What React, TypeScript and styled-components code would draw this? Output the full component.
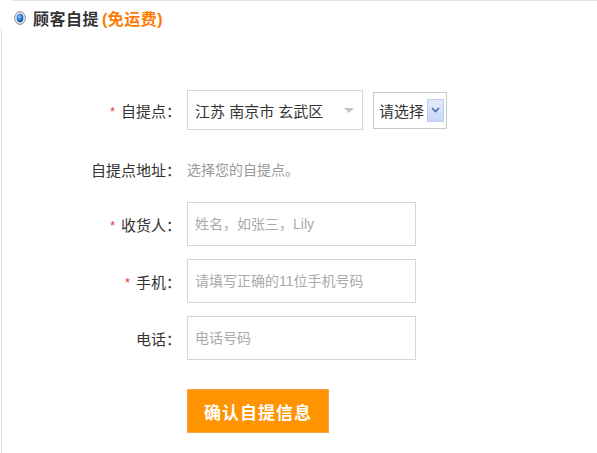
import * as React from "react";
import styled, { createGlobalStyle } from "styled-components";

const GlobalStyle = createGlobalStyle`
  html, body {
    margin: 0;
    padding: 0;
    background: #fff;
  }
  body {
    font-family: "Liberation Sans", "Noto Sans CJK SC", sans-serif;
    color: #333;
  }
`;

const Panel = styled.div`
  width: 597px;
  height: 453px;
  display: flex;
  flex-direction: column;
  overflow: hidden;
`;

const Header = styled.div`
  margin-left: 12px;
  border-top: 1px solid #e3e3e3;
  height: 29px;
  padding: 6px 0 0 2px;
  box-sizing: border-box;
  display: flex;
  align-items: center;
  gap: 7px;
`;

const Title = styled.span`
  font-size: 16px;
  font-weight: bold;
  color: #333;
  letter-spacing: 0.5px;
`;

const Free = styled.span`
  color: #ff7a00;
  margin-left: 3px;
`;

const Body = styled.div`
  flex: 1;
  margin-left: 1px;
  border-left: 1px solid #dcdcdc;
  padding-top: 61px;
  display: grid;
  grid-template-columns: 179px 1fr;
  column-gap: 6px;
  align-content: start;
`;

const Label = styled.div<{ $h: number; $mt?: number }>`
  height: ${(p) => p.$h}px;
  margin-top: ${(p) => p.$mt ?? 0}px;
  display: flex;
  align-items: center;
  justify-content: flex-end;
  font-size: 15px;
  color: #333;
`;

const Star = styled.span`
  color: #e4393c;
  font-size: 13px;
  margin-right: 6px;
  position: relative;
  top: 1px;
`;

const Field = styled.div<{ $h: number; $mt?: number }>`
  height: ${(p) => p.$h}px;
  margin-top: ${(p) => p.$mt ?? 0}px;
  display: flex;
  align-items: center;
  gap: 10px;
`;

const AreaSelect = styled.div`
  box-sizing: border-box;
  width: 176px;
  height: 40px;
  border: 1px solid #d6d6d6;
  display: flex;
  align-items: center;
  justify-content: space-between;
  padding: 0 8px 0 7px;
  font-size: 15px;
  color: #333;
`;

const Caret = styled.span`
  width: 0;
  height: 0;
  border-left: 5px solid transparent;
  border-right: 5px solid transparent;
  border-top: 5px solid #c4c4c4;
`;

const NativeSelect = styled.div`
  box-sizing: border-box;
  width: 74px;
  height: 37px;
  border: 1px solid #c8c8c8;
  display: flex;
  align-items: center;
  justify-content: space-between;
  padding: 0 2px 0 5px;
  font-size: 15px;
  color: #333;
`;

const DropButton = styled.span`
  box-sizing: border-box;
  width: 17px;
  height: 23px;
  background: linear-gradient(#e2eafc, #c9d7f7);
  border: 1px solid #bccdf1;
  display: flex;
  align-items: center;
  justify-content: center;
`;

const Hint = styled.span`
  font-size: 14px;
  color: #999;
`;

const Input = styled.input`
  box-sizing: border-box;
  width: 229px;
  height: 44px;
  border: 1px solid #d6d6d6;
  padding: 0 7px;
  font-size: 14px;
  font-family: inherit;
  color: #333;
  outline: none;
  &::placeholder {
    color: #aaa;
  }
`;

const Submit = styled.button`
  box-sizing: border-box;
  width: 142px;
  height: 44px;
  background: #ff9400;
  border: 1px solid #f6a44a;
  color: #fff;
  font-family: inherit;
  font-size: 17px;
  font-weight: bold;
  letter-spacing: 1px;
  cursor: pointer;
`;

const RadioIcon = () => (
  <svg width="12" height="14" viewBox="0 0 12 14">
    <defs>
      <radialGradient id="dot" cx="0.4" cy="0.35" r="0.7">
        <stop offset="0" stopColor="#8fd0ff" />
        <stop offset="0.6" stopColor="#1a73d6" />
        <stop offset="1" stopColor="#0b4fa6" />
      </radialGradient>
    </defs>
    <ellipse cx="6" cy="7" rx="5.4" ry="6.4" fill="#e4e4e4" stroke="#8f8f8f" strokeWidth="1" />
    <ellipse cx="6" cy="7" rx="3.3" ry="4.2" fill="url(#dot)" />
  </svg>
);

const ChevronDown = () => (
  <svg width="9" height="6" viewBox="0 0 9 6">
    <path d="M1 1 L4.5 4.5 L8 1" fill="none" stroke="#4a6aa8" strokeWidth="1.6" />
  </svg>
);

export default function App() {
  return (
    <>
      <GlobalStyle />
      <Panel>
        <Header>
          <RadioIcon />
          <Title>
            顾客自提<Free>(免运费)</Free>
          </Title>
        </Header>
        <Body>
          <Label $h={40}>
            <Star>*</Star>自提点：
          </Label>
          <Field $h={40}>
            <AreaSelect>
              <span>江苏 南京市 玄武区</span>
              <Caret />
            </AreaSelect>
            <NativeSelect>
              <span>请选择</span>
              <DropButton>
                <ChevronDown />
              </DropButton>
            </NativeSelect>
          </Field>

          <Label $h={40} $mt={19}>
            自提点地址：
          </Label>
          <Field $h={40} $mt={19}>
            <Hint>选择您的自提点。</Hint>
          </Field>

          <Label $h={44} $mt={13}>
            <Star>*</Star>收货人：
          </Label>
          <Field $h={44} $mt={13}>
            <Input placeholder="姓名，如张三，Lily" />
          </Field>

          <Label $h={44} $mt={13}>
            <Star>*</Star>手机：
          </Label>
          <Field $h={44} $mt={13}>
            <Input placeholder="请填写正确的11位手机号码" />
          </Field>

          <Label $h={44} $mt={13}>
            电话：
          </Label>
          <Field $h={44} $mt={13}>
            <Input placeholder="电话号码" />
          </Field>

          <div />
          <Field $h={44} $mt={29}>
            <Submit type="button">确认自提信息</Submit>
          </Field>
        </Body>
      </Panel>
    </>
  );
}
